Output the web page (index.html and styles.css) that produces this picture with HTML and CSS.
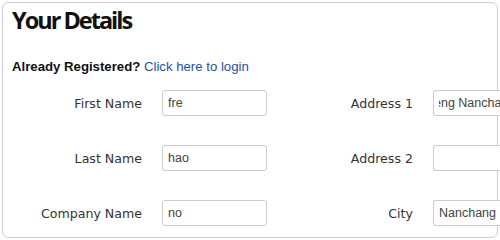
FILE: index.html
```html
<!DOCTYPE html>
<html lang="en">
<head>
<meta charset="utf-8">
<title>Your Details</title>
<link rel="stylesheet" href="styles.css">
</head>
<body>
<section class="panel">
  <h1 class="title">Your Details</h1>
  <p class="login-note"><strong>Already Registered?</strong> <a class="login-link" href="#">Click here to login</a></p>
  <form class="details-form">
    <label class="field-label" for="first">First Name</label>
    <input class="field-input" id="first" type="text" value="fre">
    <label class="field-label" for="addr1">Address 1</label>
    <input class="field-input field-edge field-scrolled" id="addr1" type="text" value="eng Nanchang">

    <label class="field-label" for="last">Last Name</label>
    <input class="field-input" id="last" type="text" value="hao">
    <label class="field-label" for="addr2">Address 2</label>
    <input class="field-input field-edge" id="addr2" type="text" value="">

    <label class="field-label" for="company">Company Name</label>
    <input class="field-input" id="company" type="text" value="no">
    <label class="field-label" for="city">City</label>
    <input class="field-input field-edge" id="city" type="text" value="Nanchang">
  </form>
</section>
</body>
</html>
```
FILE: styles.css
```css
html, body {
  margin: 0;
  padding: 0;
  overflow: hidden;
  background: #ffffff;
}

body {
  width: 500px;
  height: 240px;
}

.panel {
  box-sizing: border-box;
  margin: 2px 0 0 2px;
  width: 496px;
  height: 236px;
  border: 1px solid #cdc9e0;
  border-radius: 6px;
  padding: 3px 0 0 9px;
}

.title {
  margin: 0;
  font-family: "Open Sans", "DejaVu Sans", sans-serif;
  font-weight: 700;
  font-size: 23.5px;
  line-height: 28px;
  letter-spacing: -2px;
  color: #111111;
}

.login-note {
  margin: 25px 0 0 0;
  font-family: "Liberation Sans", Arial, sans-serif;
  font-size: 13.2px;
  line-height: 16px;
  color: #111111;
}

.login-link {
  color: #1f4fa6;
  text-decoration: none;
}

.details-form {
  margin-top: 15px;
  display: grid;
  grid-template-columns: 130px 105px 126px 67px;
  column-gap: 20px;
  row-gap: 29px;
  align-items: center;
}

.field-label {
  padding-top: 1px;
  text-align: right;
  font-family: "DejaVu Sans", Verdana, sans-serif;
  font-size: 12.6px;
  color: #333333;
}

.field-input {
  box-sizing: border-box;
  width: 105px;
  height: 26px;
  margin: 0;
  padding: 0 4px 0 5px;
  border: 1px solid #cccccc;
  border-radius: 3px;
  background: #ffffff;
  font-family: "Liberation Sans", Arial, sans-serif;
  font-size: 12.5px;
  color: #444444;
  outline: none;
}

.field-edge {
  width: 67px;
  padding-right: 0;
  border-right-width: 0;
  border-top-right-radius: 0;
  border-bottom-right-radius: 0;
}

.field-scrolled {
  text-indent: -5px;
}
```
